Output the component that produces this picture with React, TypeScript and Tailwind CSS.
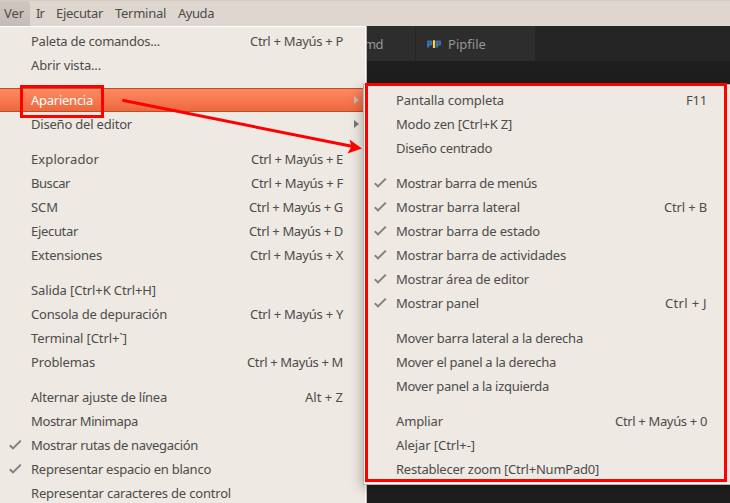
import { useLayoutEffect, useRef, useState } from "react";

type Item = { label: string; w: number; keys?: string; kw?: number; checked?: boolean; arrow?: boolean; active?: boolean };

const viewMenu: Item[][] = [
  [
    { label: "Paleta de comandos...", w: 129, keys: "Ctrl + Mayús + P", kw: 93 },
    { label: "Abrir vista...", w: 70 },
  ],
  [
    { label: "Apariencia", w: 62, arrow: true, active: true },
    { label: "Diseño del editor", w: 101, arrow: true },
  ],
  [
    { label: "Explorador", w: 68, keys: "Ctrl + Mayús + E", kw: 92 },
    { label: "Buscar", w: 39, keys: "Ctrl + Mayús + F", kw: 92 },
    { label: "SCM", w: 27, keys: "Ctrl + Mayús + G", kw: 94 },
    { label: "Ejecutar", w: 47, keys: "Ctrl + Mayús + D", kw: 94 },
    { label: "Extensiones", w: 71, keys: "Ctrl + Mayús + X", kw: 93 },
  ],
  [
    { label: "Salida [Ctrl+K Ctrl+H]", w: 125 },
    { label: "Consola de depuración", w: 136, keys: "Ctrl + Mayús + Y", kw: 93 },
    { label: "Terminal [Ctrl+`]", w: 96 },
    { label: "Problemas", w: 64, keys: "Ctrl + Mayús + M", kw: 96 },
  ],
  [
    { label: "Alternar ajuste de línea", w: 136, keys: "Alt + Z", kw: 38 },
    { label: "Mostrar Minimapa", w: 107 },
    { label: "Mostrar rutas de navegación", w: 167, checked: true },
    { label: "Representar espacio en blanco", w: 180, checked: true },
    { label: "Representar caracteres de control", w: 200 },
  ],
];

const appearanceMenu: Item[][] = [
  [
    { label: "Pantalla completa", w: 108, keys: "F11", kw: 21 },
    { label: "Modo zen [Ctrl+K Z]", w: 116 },
    { label: "Diseño centrado", w: 96 },
  ],
  [
    { label: "Mostrar barra de menús", w: 141, checked: true },
    { label: "Mostrar barra lateral", w: 124, checked: true, keys: "Ctrl + B", kw: 43 },
    { label: "Mostrar barra de estado", w: 144, checked: true },
    { label: "Mostrar barra de actividades", w: 170, checked: true },
    { label: "Mostrar área de editor", w: 133, checked: true },
    { label: "Mostrar panel", w: 83, checked: true, keys: "Ctrl + J", kw: 42 },
  ],
  [
    { label: "Mover barra lateral a la derecha", w: 187 },
    { label: "Mover el panel a la derecha", w: 160 },
    { label: "Mover panel a la izquierda", w: 153 },
  ],
  [
    { label: "Ampliar", w: 47, keys: "Ctrl + Mayús + 0", kw: 92 },
    { label: "Alejar [Ctrl+-]", w: 79 },
    { label: "Restablecer zoom [Ctrl+NumPad0]", w: 203 },
  ],
];

/** Text whose tracking is adjusted so that it fills the given width. */
function Fit({ text, w }: { text: string; w: number }) {
  const ref = useRef<HTMLSpanElement>(null);
  const [spacing, setSpacing] = useState(0);
  useLayoutEffect(() => {
    const el = ref.current;
    if (el) setSpacing((w - el.getBoundingClientRect().width) / text.length);
  }, [text, w]);
  return (
    <span ref={ref} className="whitespace-pre" style={{ letterSpacing: spacing }}>
      {text}
    </span>
  );
}

function Row({ item }: { item: Item }) {
  return (
    <div
      className={
        "flex h-6 shrink-0 items-center " +
        (item.active
          ? "border-y border-[#b5502f] bg-linear-to-b from-[#ff8a61] to-[#ec683d] text-white"
          : "text-[#4c4c4c]")
      }
    >
      <div className="flex w-[31px] shrink-0 pl-[9px]">
        {item.checked && (
          <svg width="13" height="12" viewBox="0 0 13 12" fill="none">
            <path d="M0.8 6.2 4 9.4 11.8 1.6" stroke="#808080" strokeWidth="2" />
          </svg>
        )}
      </div>
      <Fit text={item.label} w={item.w} />
      <div className="flex-1" />
      {item.keys && (
        <div className="mr-[23px] flex">
          <Fit text={item.keys} w={item.kw ?? 0} />
        </div>
      )}
      {item.arrow && (
        <svg className="mr-[7px]" width="5" height="8" viewBox="0 0 5 8">
          <path d="M0 0 5 4 0 8Z" fill={item.active ? "#c4bcb6" : "#777"} />
        </svg>
      )}
    </div>
  );
}

function Menu({ groups }: { groups: Item[][] }) {
  return (
    <div className="flex flex-col gap-[11px]">
      {groups.map((g, i) => (
        <div key={i} className="flex flex-col">
          {g.map((item) => (
            <Row key={item.label} item={item} />
          ))}
        </div>
      ))}
    </div>
  );
}

function PipIcon() {
  return (
    <svg width="14" height="9" viewBox="0 0 14 9">
      <path d="M0 1.5Q0 .5 1 .5H4.2Q5.2.5 5.2 1.5V4.5Q5.2 5.5 4.2 5.5H2.2V7.5H0ZM9 1.5Q9 .5 10 .5H13Q14 .5 14 1.5V4.5Q14 5.5 13 5.5H11.2V7.5H9Z" fill="#3775a9" />
      <path d="M2 2.5h1v1H2ZM11 2.5h1v1h-1Z" fill="#2d2d2d" />
      <path d="M5.9 .2h2.3V8H5.9Z" fill="#ffcf3f" />
    </svg>
  );
}

export default function App() {
  return (
    <div className="relative flex h-[503px] w-[730px] flex-col overflow-hidden bg-[#1e1e1e] font-['Noto_Sans','Open_Sans',sans-serif] text-[13px] leading-none text-[#4c4c4c]">
      <header className="flex h-[26px] shrink-0 items-stretch border-t border-[#d5ccc4] bg-[#dfd7cf]">
        <div className="flex w-[30px] items-center rounded-tr bg-linear-to-b from-[#d0c8c0] to-[#c5bdb5] pl-1">
          <Fit text="Ver" w={20} />
        </div>
        <div className="flex items-center gap-3 pl-[6px]">
          <Fit text="Ir" w={8} />
          <Fit text="Ejecutar" w={47} />
          <Fit text="Terminal" w={51} />
          <Fit text="Ayuda" w={36} />
        </div>
      </header>
      <main className="flex min-h-0 flex-1">
        <section className="w-[366px] shrink-0 overflow-hidden border-t border-r border-white bg-[#eee9e2] pt-[2px]">
          <div className="w-[366px]">
            <Menu groups={viewMenu} />
          </div>
        </section>
        <section className="min-w-0 flex-1 border-l border-[#c0b8b0]">
          <div className="flex h-[35px] bg-[#252526] text-[#969696]">
            <div className="flex w-[49px] items-center overflow-hidden border-r border-[#252526] bg-[#2d2d2d] pt-[2px]">
              <div className="-ml-[3px]">
                <Fit text="md" w={19} />
              </div>
            </div>
            <div className="flex w-[119px] items-center gap-[7px] bg-[#2d2d2d] pt-[2px] pl-[11px]">
              <PipIcon />
              <Fit text="Pipfile" w={38} />
            </div>
          </div>
        </section>
      </main>
      <aside className="absolute top-[84px] left-[363px] h-[401px] w-[370px] border border-[#bdb5ad] bg-[#eee9e2] shadow-[-1px_3px_12px_rgba(0,0,0,0.28)]">
        <div className="h-full w-full border border-[#faf8f5] pt-[2px]">
          <div className="w-[365px]">
            <Menu groups={appearanceMenu} />
          </div>
        </div>
      </aside>
      <div className="absolute top-[85px] left-5 h-[33px] w-[84px] border-3 border-[#f00]" />
      <div className="absolute top-[83px] left-[365px] h-[399px] w-[362px] border-3 border-[#f00]" />
      <svg className="absolute top-0 left-0" width="730" height="503">
        <path d="M123.500 100.500 353 146.500" stroke="#f00" strokeWidth="3" strokeLinecap="round" />
        <path d="M362 148.500 347.500 153.500 351.500 146.500 349.500 139.500Z" fill="#f00" />
      </svg>
    </div>
  );
}
